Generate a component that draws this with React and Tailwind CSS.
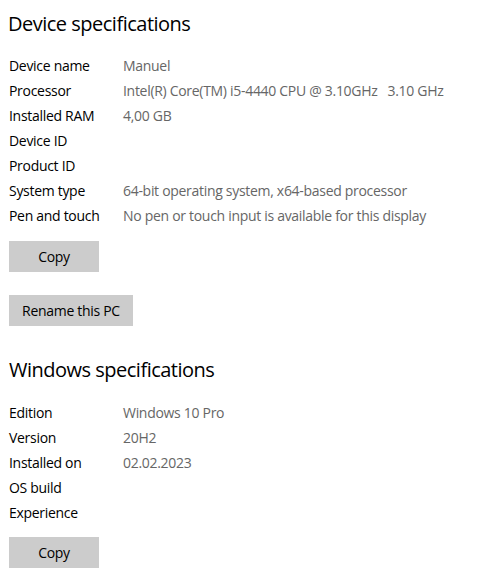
import React from 'react';

const font = { fontFamily: '"Open Sans", "Noto Sans", sans-serif' };

function SpecRow({ label, value }) {
    return (
        <div className="flex h-[25px] items-center text-[14px] tracking-[-0.3px]">
            <span className="w-[114px] shrink-0 text-black">{label}</span>
            <span className="text-[#666666] whitespace-pre">{value}</span>
        </div>
    );
}

function GrayButton({ children, width }) {
    return (
        <button className={`h-[31px] ${width} bg-[#cccccc] text-[14px] tracking-[-0.3px] text-black`}>
            {children}
        </button>
    );
}

export default function App() {
    const device = [
        ['Device name', 'Manuel'],
        ['Processor', 'Intel(R) Core(TM) i5-4440 CPU @ 3.10GHz   3.10 GHz'],
        ['Installed RAM', '4,00 GB'],
        ['Device ID', ''],
        ['Product ID', ''],
        ['System type', '64-bit operating system, x64-based processor'],
        ['Pen and touch', 'No pen or touch input is available for this display'],
    ];

    const windows = [
        ['Edition', 'Windows 10 Pro'],
        ['Version', '20H2'],
        ['Installed on', '02.02.2023'],
        ['OS build', ''],
        ['Experience', ''],
    ];

    return (
        <div className="w-[499px] h-[581px] bg-white pl-[9px] overflow-hidden" style={font}>
            <h2 className="text-[20px] leading-[28px] pt-[10px] tracking-[-0.5px] text-black -ml-[1px]">Device specifications</h2>
            <div className="mt-[15px]">
                {device.map(([l, v]) => (
                    <SpecRow key={l} label={l} value={v} />
                ))}
            </div>
            <div className="mt-[13px] flex flex-col items-start gap-[23px]">
                <GrayButton width="w-[90px]">Copy</GrayButton>
                <GrayButton width="w-[124px]">Rename this PC</GrayButton>
            </div>

            <h2 className="text-[20px] leading-[28px] mt-[30px] tracking-[-0.5px] text-black">Windows specifications</h2>
            <div className="mt-[16px]">
                {windows.map(([l, v]) => (
                    <SpecRow key={l} label={l} value={v} />
                ))}
            </div>
            <div className="mt-[12px]">
                <GrayButton width="w-[90px]">Copy</GrayButton>
            </div>
        </div>
    );
}
